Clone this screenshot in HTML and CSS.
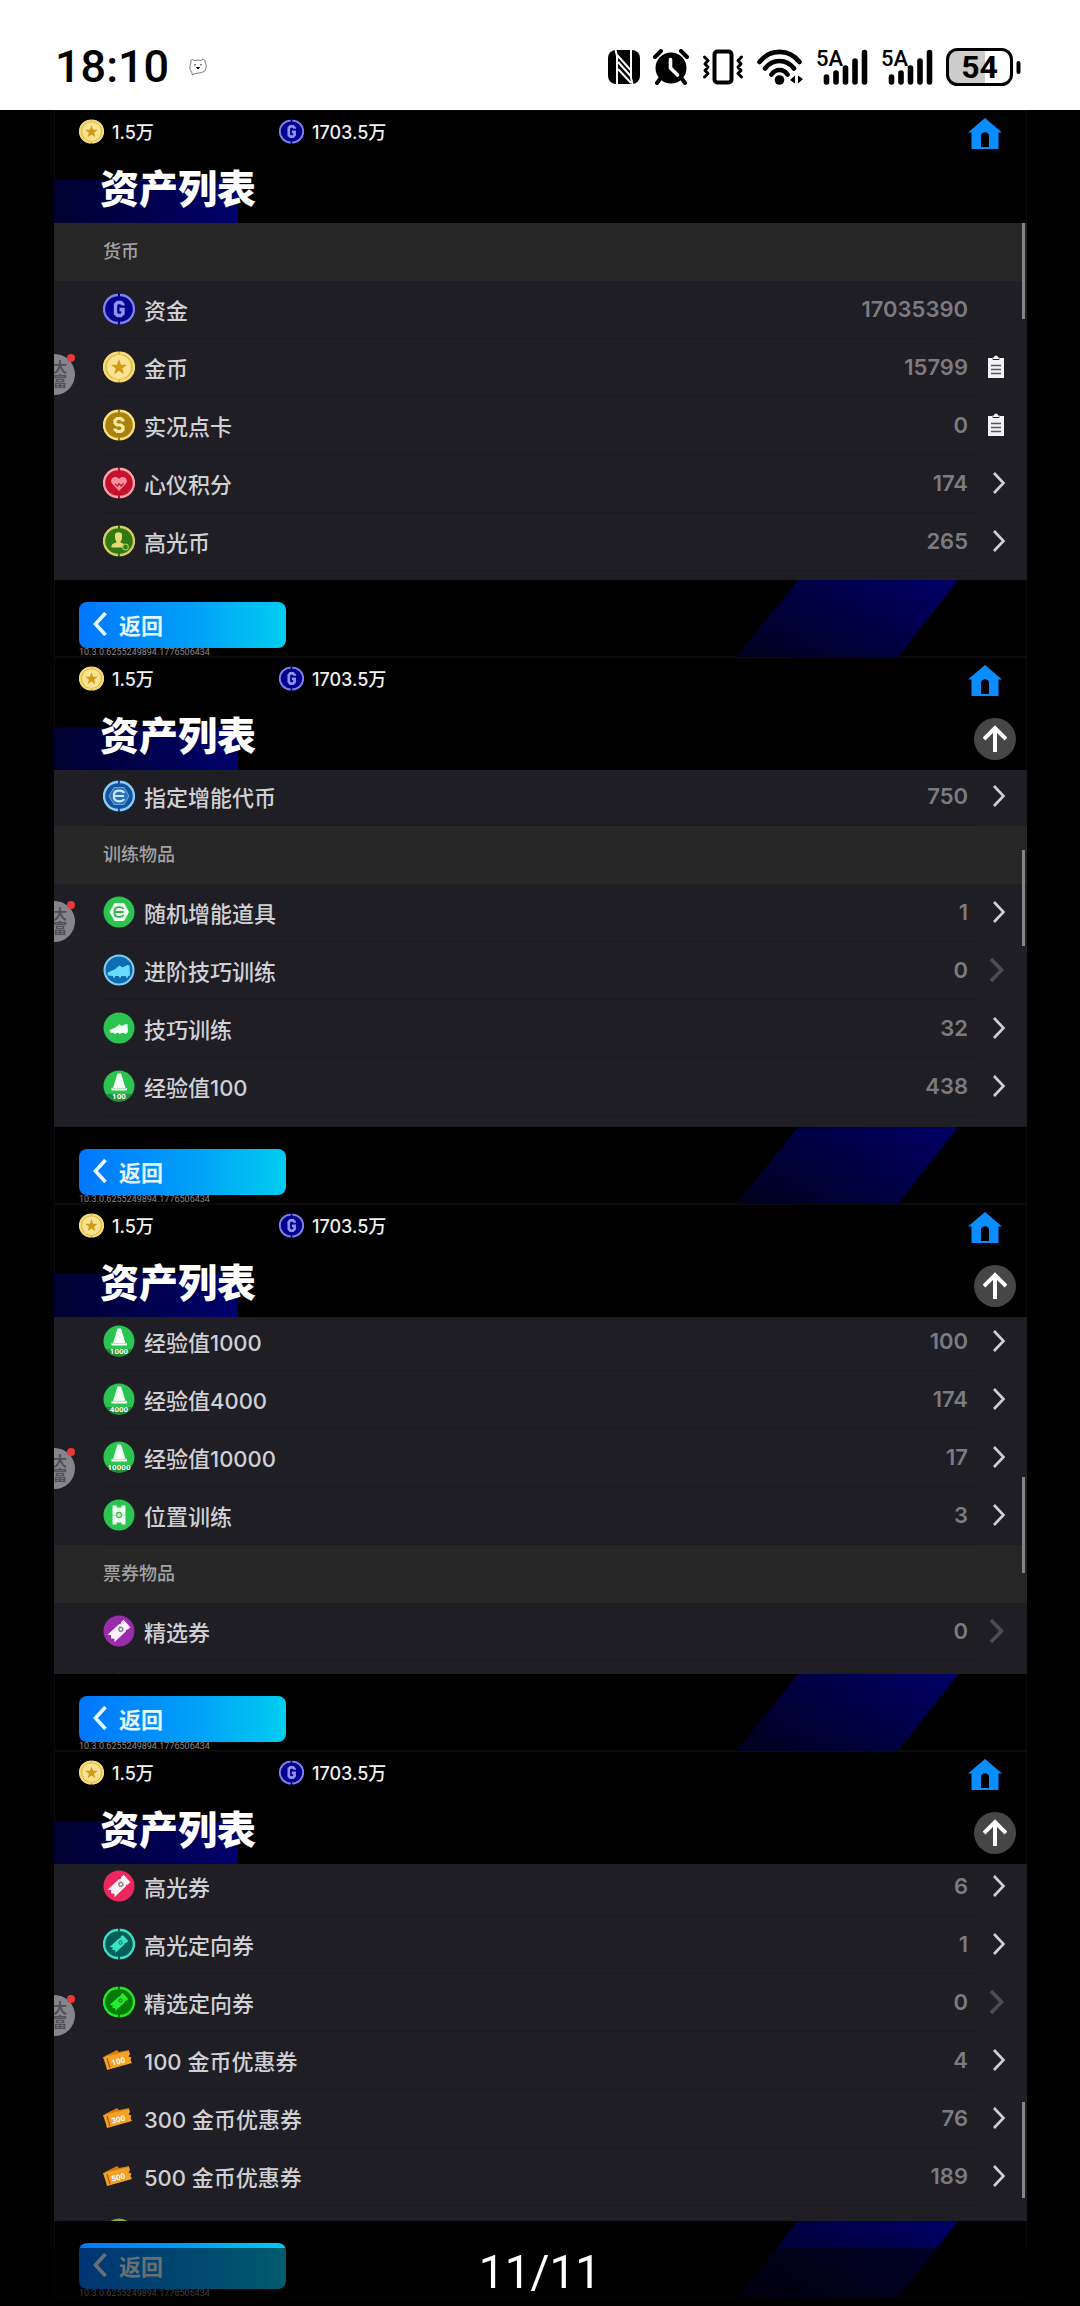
FILE: index.html
```html
<!DOCTYPE html>
<html lang="zh-CN">
<head>
  <meta charset="UTF-8" />
  <meta name="viewport" content="width=device-width, initial-scale=1" />
  <title>资产列表</title>
  <link rel="stylesheet" href="styles.css">
</head>
<body>

<!-- shared icons -->
<svg class="sprite" aria-hidden="true">
  <symbol id="ring" viewBox="0 0 32 32">
    <path d="M17 2a14 14 0 0 1 0 28M15 2a14 14 0 0 0 0 28" fill="none" stroke="currentColor" stroke-width="2.4"/>
  </symbol>
  <symbol id="g" viewBox="0 0 32 32">
    <circle cx="16" cy="16" r="15.500" fill="#00008c"/>
    <use href="#ring" color="#8080ee"/>
    <path d="M20 12.500v-1L18 9.500h-3.500l-2 2v9l2 2H18l2-2v-4h-3.500" fill="none" stroke="#9292f4" stroke-width="3.400"/>
  </symbol>
  <symbol id="gold" viewBox="0 0 32 32">
    <circle cx="16" cy="16" r="15.500" fill="#e3bb48"/>
    <use href="#ring" color="#f7dc78"/>
    <circle cx="16" cy="16" r="12" fill="#fbe394"/>
    <path d="M16 8l2 5.700 6 .1-4.800 3.700 1.800 5.800-5-3.500-5 3.500 1.800-5.800L8 13.800l6-.1z" fill="#d19a12"/>
  </symbol>
  <symbol id="points" viewBox="0 0 32 32">
    <circle cx="16" cy="16" r="15.500" fill="#a9830d"/>
    <use href="#ring" color="#f6df85"/>
    <path d="M20 12.500v-1l-2-2h-4l-2 2v2.500l2 2h4l2 2v2.500l-2 2h-4l-2-2v-1" fill="none" stroke="#fbeaa6" stroke-width="3.200"/>
  </symbol>
  <symbol id="heart" viewBox="0 0 32 32">
    <circle cx="16" cy="16" r="15.500" fill="#c5122c"/>
    <use href="#ring" color="#f7a1ae"/>
    <path d="M16 24l-7-7.500c-3-4 2.500-9.500 7-4.500 4.500-5 10 .5 7 4.500z" fill="#ff8f9d"/>
    <path d="M12 17l2.500 2 1.500-2.500 2 2.500 2.500-2.500" fill="none" stroke="#c5122c" stroke-width="1.200"/>
  </symbol>
  <symbol id="highlight" viewBox="0 0 32 32">
    <circle cx="16" cy="16" r="15.500" fill="#2f7a15"/>
    <use href="#ring" color="#d9cc62"/>
    <path d="M12 9.500c0-3 7-3 7 0v4c0 1.500-1.500 2-1.500 4l3.500 1.500-1.500 3.500H8.500c0-4 1.500-4 5-5 0-2-1.500-2.500-1.500-4z" fill="#e6dc76"/>
    <circle cx="22.500" cy="22" r="2.800" fill="none" stroke="#a8c850" stroke-width="1.200"/>
  </symbol>
  <symbol id="boost" viewBox="0 0 32 32">
    <circle cx="16" cy="16" r="15.500" fill="#16539c"/>
    <use href="#ring" color="#8bcdf6"/>
    <path d="M11 7.500h10l5 8.500-5 8.500H11L6 16z" fill="#2d73bc" stroke="#68a9e3"/>
    <path d="M21 13c-1-3-9-3.500-10 1v4c1 4.500 9 4 10 1M11 16h10" fill="none" stroke="#c8ebff" stroke-width="2.200"/>
  </symbol>
  <symbol id="random" viewBox="0 0 32 32">
    <circle cx="16" cy="16" r="15.500" fill="#2cc450"/>
    <path d="M11.500 7h9.500l5 9-5 9h-9.500l-5-9z" fill="#f0fff2"/>
    <path d="M20.500 13c-1-2.500-8-3-9 1v4c1 4 8 3.500 9 1M12 16h8.500" fill="none" stroke="#36ad4b" stroke-width="1.800"/>
  </symbol>
  <symbol id="boot" viewBox="0 0 32 32">
    <path d="M4.500 18.500l7-3 5-4 3 2 5-2.500 2 .5.500 10-2 .5v1.500h-2v-1.500h-5v1.500h-2v-1.500h-4v1.500h-2v-1.500l-5-.5z" fill="currentColor"/>
  </symbol>
  <symbol id="boot-blue" viewBox="0 0 32 32">
    <circle cx="16" cy="16" r="14.500" fill="#0d6cb2" stroke="#80ccf3" stroke-width="2"/>
    <use href="#boot" color="#6adcff"/>
  </symbol>
  <symbol id="boot-green" viewBox="0 0 32 32">
    <circle cx="16" cy="16" r="15.500" fill="#2cc450"/>
    <use href="#boot" x="3" y="3" width="26" height="26" color="#f2fff4"/>
  </symbol>
  <symbol id="cone" viewBox="0 0 32 32">
    <circle cx="16" cy="16" r="15.500" fill="#2cc450"/>
    <path d="M3 24h26c-5 10-21 10-26 0z" fill="#1f8f3a"/>
    <path d="M14.500 3.500h3.500L22.500 18H24v2.500H8.500V18H10z" fill="#f4fff5"/>
    <path d="M9 18.500h14.500" stroke="#abdcaf" stroke-width=".8"/>
  </symbol>
  <symbol id="pitch" viewBox="0 0 32 32">
    <circle cx="16" cy="16" r="15.500" fill="#2cc450"/>
    <path d="M9.500 6.500h4v2h5v-2h4v19h-4v-2h-5v2h-4z" fill="#f0fff2"/>
    <circle cx="16" cy="16" r="2.500" fill="none" stroke="#46b65a" stroke-width="1.300"/>
    <path d="M9 16h14" stroke="#83ce8f" stroke-width=".8"/>
  </symbol>
  <symbol id="pass" viewBox="0 0 32 32">
    <g transform="rotate(-43 16 16)">
      <path d="M5 11h15.500l1.500 1 1.500-1H27v10h-3.500l-1.500-1-1.500 1H5l2.500-2.500L5 16l2.500-2.500z" fill="currentColor"/>
      <circle cx="18.500" cy="16" r="2" fill="none" stroke="#222" stroke-opacity=".55" stroke-width="1.400"/>
    </g>
  </symbol>
  <symbol id="pass-purple" viewBox="0 0 32 32">
    <circle cx="16" cy="16" r="15.500" fill="#9a2bac"/>
    <use href="#pass" color="#fdf2ff"/>
  </symbol>
  <symbol id="pass-pink" viewBox="0 0 32 32">
    <circle cx="16" cy="16" r="15.500" fill="#ec285f"/>
    <use href="#pass" color="#fff2f6"/>
  </symbol>
  <symbol id="pass-teal" viewBox="0 0 32 32">
    <circle cx="16" cy="16" r="15.500" fill="#075d58"/>
    <use href="#ring" color="#3de0c5"/>
    <use href="#pass" x="3" y="3" width="26" height="26" color="#35e6cb"/>
  </symbol>
  <symbol id="pass-green" viewBox="0 0 32 32">
    <circle cx="16" cy="16" r="15.500" fill="#047b06"/>
    <use href="#ring" color="#27e42c"/>
    <use href="#pass" x="3" y="3" width="26" height="26" color="#25ef2b"/>
  </symbol>
  <symbol id="coupon" viewBox="0 0 32 32">
    <path d="M2 12l12-6 2 2 10-2v6L5 20z" fill="#d97b13"/>
    <path d="M0 13l26-6 1 3-1.500 2.500 3 1-1 2.500 1.500 3L4 26l-1-4z" fill="#f4a125"/>
    <path d="M4 14l3 10" stroke="#a25a08" stroke-width="1.200"/>
  </symbol>
  <symbol id="next" viewBox="0 0 20 24">
    <path d="M8 2l9.500 10L8 22" fill="none" stroke="currentColor" stroke-width="2.600"/>
  </symbol>
  <symbol id="next-off" viewBox="0 0 20 24">
    <path d="M5 1l10.500 11L5 23" fill="none" stroke="currentColor" stroke-width="3.600"/>
  </symbol>
  <symbol id="clip" viewBox="0 0 20 24">
    <path d="M2 3h4l1 2h6l1-2h4v20H2z" fill="#f2f2f4"/>
    <path d="M6.500 4V2.500h1.500a2 2 0 0 1 4 0h1.500V4z" fill="#f2f2f4"/>
    <path d="M5 10.500h10M5 14.500h10M5 18.500h10" stroke="#55555a" stroke-width="1.300"/>
  </symbol>
  <symbol id="home" viewBox="0 0 34 31">
    <path d="M17 0l17 14.500h-3.500V31h-27V14.500H0zM13 29h8V18c0-5-8-5-8 0z" fill="#0a8dff" fill-rule="evenodd"/>
  </symbol>
  <symbol id="up" viewBox="0 0 24 28">
    <path d="M12 27V3M1 14L12 3l11 11" fill="none" stroke="#fff" stroke-width="4"/>
  </symbol>
  <symbol id="back" viewBox="0 0 14 24">
    <path d="M12.500 1L2.500 12l10 11" fill="none" stroke="currentColor" stroke-width="3.600"/>
  </symbol>
  <symbol id="signal" viewBox="0 0 52 36">
    <text x="0" y="17" class="net">5A</text>
    <path d="M10.500 28v5M20 24v9M29.500 19v14M39 12v21M48.500 3.500V33" stroke="#000" stroke-width="5.600" stroke-linecap="round"/>
  </symbol>
</svg>

<header class="status">
  <time class="clock">18:10</time>
  <svg class="bear" viewBox="0 0 18 18" fill="none" stroke="#555"><path d="M3 17c.5-1 0-2-.5-3C0 11 1 7 2 5c-1-3 1-4.500 3-2.500 3-.5 5-.5 7 0 1-2 4.500-1.500 4 1.500 2 3 1.500 7-1 9.500-3 2-8 1-12 3.500z" stroke-width=".8"/><path d="M6 6v1.500M12 6v1.500M7.500 9.500h3L9 11z" stroke="#000"/></svg>
  <div class="status-icons">
    <svg width="32" height="34" viewBox="0 0 32 34"><rect width="32" height="34" rx="8"/><path d="M7.500 0l1.500 6v28M24.500 34L23 28V0" stroke="#fff" stroke-width="2" fill="none"/><path d="M9 5l14 15.500M10 12l13 14.500M10 19l13 14" stroke="#fff" stroke-width="2" fill="none"/></svg>
    <svg width="36" height="36" viewBox="0 0 36 36"><circle cx="18" cy="19" r="15.500"/><path d="M2 8l6-6M34 8l-6-6M7 30l-3 4M29 30l3 4" stroke="#000" stroke-width="4" stroke-linecap="round"/><path d="M17.500 10.500V19l7 7" fill="none" stroke="#fff" stroke-width="3.600" stroke-linecap="round"/></svg>
    <svg width="42" height="36" viewBox="0 0 42 36" fill="none" stroke="#000" stroke-linecap="round" stroke-linejoin="round"><rect x="12.500" y="2.500" width="17" height="31" rx="3" stroke-width="4"/><path d="M2.500 8l3.500 3.500L3 15l3 3-3 3.500 3 3L2.500 28M39.500 8L36 11.500l3 3.500-3 3 3 3.500-3 3 3.500 3.500" stroke-width="3"/></svg>
    <svg width="46" height="36" viewBox="0 0 46 36" fill="none" stroke="#000" stroke-width="4.600" stroke-linecap="round"><path d="M2.500 13C13-.5 32-.5 42.500 13M8 19.500c7.500-10 21.500-10 29 0M14.500 25.500c4-6 12-6 16 0"/><circle cx="22.500" cy="31" r="4.800" fill="#000" stroke="none"/><path d="M38 26.500v8l-5-3.500zM41 34.500v-8l5 3.500z" fill="#000" stroke="none"/></svg>
    <svg width="52" height="36"><use href="#signal"/></svg>
    <svg width="52" height="36"><use href="#signal"/></svg>
    <svg width="76" height="38" viewBox="0 0 76 38"><path d="M12 2h27v34H12C6 36 2 32 2 26V12C2 6 6 2 12 2z" fill="#ccc"/><rect x="1.500" y="1.500" width="64" height="35" rx="10" fill="none" stroke="#000" stroke-width="3"/><path d="M72.500 15v9" stroke="#000" stroke-width="4" stroke-linecap="round"/><text x="33.500" y="30" text-anchor="middle" class="charge">54</text></svg>
  </div>
</header>

<main class="viewer">

  <section class="shot">
    <div class="top">
      <div class="wallet">
        <span class="money"><svg><use href="#gold"/></svg>1.5万</span>
        <span class="money"><svg><use href="#g"/></svg>1703.5万</span>
        <a class="home" href="#" aria-label="主页"><svg><use href="#home"/></svg></a>
      </div>
      <h2 class="title">资产列表</h2>
    </div>
    <div class="list">
      <ul class="rows">
        <li class="group">货币</li>
        <li class="row"><svg class="icon"><use href="#g"/></svg><span class="name">资金</span><span class="count">17035390</span><span class="go"></span></li>
        <li class="row"><svg class="icon"><use href="#gold"/></svg><span class="name">金币</span><span class="count">15799</span><button class="go" aria-label="金币明细"><svg><use href="#clip"/></svg></button></li>
        <li class="row"><svg class="icon"><use href="#points"/></svg><span class="name">实况点卡</span><span class="count">0</span><button class="go" aria-label="点卡明细"><svg><use href="#clip"/></svg></button></li>
        <li class="row"><svg class="icon"><use href="#heart"/></svg><span class="name">心仪积分</span><span class="count">174</span><button class="go" aria-label="查看"><svg><use href="#next"/></svg></button></li>
        <li class="row"><svg class="icon"><use href="#highlight"/></svg><span class="name">高光币</span><span class="count">265</span><button class="go" aria-label="查看"><svg><use href="#next"/></svg></button></li>
      </ul>
      <span class="thumb"></span>
      <span class="float"><b>大<br>富</b></span>
    </div>
    <div class="bottom">
      <button class="back"><svg><use href="#back"/></svg>返回</button>
      <small class="version">10.3.0.6255249894.1776506434</small>
    </div>
  </section>

  <section class="shot">
    <div class="top">
      <div class="wallet">
        <span class="money"><svg><use href="#gold"/></svg>1.5万</span>
        <span class="money"><svg><use href="#g"/></svg>1703.5万</span>
        <a class="home" href="#" aria-label="主页"><svg><use href="#home"/></svg></a>
      </div>
      <h2 class="title">资产列表</h2>
      <button class="to-top" aria-label="回到顶部"><svg><use href="#up"/></svg></button>
    </div>
    <div class="list">
      <ul class="rows scroll-2">
        <li class="row"><svg class="icon"><use href="#boost"/></svg><span class="name">指定增能代币</span><span class="count">750</span><button class="go" aria-label="查看"><svg><use href="#next"/></svg></button></li>
        <li class="group">训练物品</li>
        <li class="row"><svg class="icon"><use href="#random"/></svg><span class="name">随机增能道具</span><span class="count">1</span><button class="go" aria-label="查看"><svg><use href="#next"/></svg></button></li>
        <li class="row"><svg class="icon"><use href="#boot-blue"/></svg><span class="name">进阶技巧训练</span><span class="count">0</span><button class="go" aria-label="查看" disabled><svg><use href="#next-off"/></svg></button></li>
        <li class="row"><svg class="icon"><use href="#boot-green"/></svg><span class="name">技巧训练</span><span class="count">32</span><button class="go" aria-label="查看"><svg><use href="#next"/></svg></button></li>
        <li class="row"><svg class="icon"><use href="#cone"/><text x="16" y="29">100</text></svg><span class="name">经验值100</span><span class="count">438</span><button class="go" aria-label="查看"><svg><use href="#next"/></svg></button></li>
      </ul>
      <span class="thumb thumb-2"></span>
      <span class="float"><b>大<br>富</b></span>
    </div>
    <div class="bottom">
      <button class="back"><svg><use href="#back"/></svg>返回</button>
      <small class="version">10.3.0.6255249894.1776506434</small>
    </div>
  </section>

  <section class="shot">
    <div class="top">
      <div class="wallet">
        <span class="money"><svg><use href="#gold"/></svg>1.5万</span>
        <span class="money"><svg><use href="#g"/></svg>1703.5万</span>
        <a class="home" href="#" aria-label="主页"><svg><use href="#home"/></svg></a>
      </div>
      <h2 class="title">资产列表</h2>
      <button class="to-top" aria-label="回到顶部"><svg><use href="#up"/></svg></button>
    </div>
    <div class="list">
      <ul class="rows scroll-3">
        <li class="row"><svg class="icon"><use href="#cone"/><text x="16" y="29">1000</text></svg><span class="name">经验值1000</span><span class="count">100</span><button class="go" aria-label="查看"><svg><use href="#next"/></svg></button></li>
        <li class="row"><svg class="icon"><use href="#cone"/><text x="16" y="29">4000</text></svg><span class="name">经验值4000</span><span class="count">174</span><button class="go" aria-label="查看"><svg><use href="#next"/></svg></button></li>
        <li class="row"><svg class="icon"><use href="#cone"/><text x="16" y="29">10000</text></svg><span class="name">经验值10000</span><span class="count">17</span><button class="go" aria-label="查看"><svg><use href="#next"/></svg></button></li>
        <li class="row"><svg class="icon"><use href="#pitch"/></svg><span class="name">位置训练</span><span class="count">3</span><button class="go" aria-label="查看"><svg><use href="#next"/></svg></button></li>
        <li class="group">票券物品</li>
        <li class="row"><svg class="icon"><use href="#pass-purple"/></svg><span class="name">精选券</span><span class="count">0</span><button class="go" aria-label="查看" disabled><svg><use href="#next-off"/></svg></button></li>
        <li class="row"><svg class="icon"><circle cx="16" cy="16" r="15.500" fill="#a01230"/></svg></li>
      </ul>
      <span class="thumb thumb-3"></span>
      <span class="float"><b>大<br>富</b></span>
    </div>
    <div class="bottom">
      <button class="back"><svg><use href="#back"/></svg>返回</button>
      <small class="version">10.3.0.6255249894.1776506434</small>
    </div>
  </section>

  <section class="shot">
    <div class="top">
      <div class="wallet">
        <span class="money"><svg><use href="#gold"/></svg>1.5万</span>
        <span class="money"><svg><use href="#g"/></svg>1703.5万</span>
        <a class="home" href="#" aria-label="主页"><svg><use href="#home"/></svg></a>
      </div>
      <h2 class="title">资产列表</h2>
      <button class="to-top" aria-label="回到顶部"><svg><use href="#up"/></svg></button>
    </div>
    <div class="list">
      <ul class="rows scroll-4">
        <li class="row"><svg class="icon"><use href="#pass-pink"/></svg><span class="name">高光券</span><span class="count">6</span><button class="go" aria-label="查看"><svg><use href="#next"/></svg></button></li>
        <li class="row"><svg class="icon"><use href="#pass-teal"/></svg><span class="name">高光定向券</span><span class="count">1</span><button class="go" aria-label="查看"><svg><use href="#next"/></svg></button></li>
        <li class="row"><svg class="icon"><use href="#pass-green"/></svg><span class="name">精选定向券</span><span class="count">0</span><button class="go" aria-label="查看" disabled><svg><use href="#next-off"/></svg></button></li>
        <li class="row"><svg class="icon"><use href="#coupon"/><text x="15" y="20" transform="rotate(-14 16 16)">100</text></svg><span class="name">100 金币优惠券</span><span class="count">4</span><button class="go" aria-label="查看"><svg><use href="#next"/></svg></button></li>
        <li class="row"><svg class="icon"><use href="#coupon"/><text x="15" y="20" transform="rotate(-14 16 16)">300</text></svg><span class="name">300 金币优惠券</span><span class="count">76</span><button class="go" aria-label="查看"><svg><use href="#next"/></svg></button></li>
        <li class="row"><svg class="icon"><use href="#coupon"/><text x="15" y="20" transform="rotate(-14 16 16)">500</text></svg><span class="name">500 金币优惠券</span><span class="count">189</span><button class="go" aria-label="查看"><svg><use href="#next"/></svg></button></li>
        <li class="row"><svg class="icon"><circle cx="16" cy="16" r="15.500" fill="#7fb53c"/></svg></li>
      </ul>
      <span class="thumb thumb-4"></span>
      <span class="float"><b>大<br>富</b></span>
    </div>
    <div class="bottom">
      <button class="back"><svg><use href="#back"/></svg>返回</button>
      <small class="version">10.3.0.6255249894.1776506434</small>
    </div>
  </section>

</main>

<footer class="pager">11/11</footer>

</body>
</html>
```

FILE: styles.css
```css
* {
  box-sizing: border-box;
}

body {
  margin: 0;
  background: #000;
  color: #d0d0d4;
  font-family: Inter, "Noto Sans CJK SC", sans-serif;
}

button {
  padding: 0;
  border: none;
  background: none;
  color: inherit;
  font: inherit;
  cursor: pointer;
}

.sprite {
  display: none;
}

/* phone status bar */
.status {
  display: flex;
  align-items: center;
  height: 110px;
  padding: 24px 58px 0 55px;
  background: #fff;
  color: #000;
}

.clock {
  font: 500 45px/48px Roboto, sans-serif;
}

.bear {
  width: 18px;
  height: 18px;
  margin-left: 20px;
}

.status-icons {
  display: flex;
  align-items: center;
  gap: 13px;
  margin-left: auto;
}

.net {
  font: 500 22px Roboto, sans-serif;
}

.charge {
  font: 700 32px Roboto, sans-serif;
}

/* one game screen */
.viewer {
  padding: 0 53px 8px 54px;
}

.shot {
  box-shadow: inset 0 0 0 1px #0b0b0d;
}

.top {
  position: relative;
  height: 113px;
}

.wallet {
  display: flex;
  align-items: center;
  height: 44px;
  padding: 0 25px 2px;
}

.money {
  display: flex;
  align-items: center;
  gap: 8px;
  width: 200px;
  color: #f0f0f0;
  font-size: 18px;
  font-weight: 500;
}

.money svg {
  width: 25px;
  height: 25px;
}

.home {
  display: flex;
  margin: 4px 0 0 auto;
}

.home svg {
  width: 34px;
  height: 31px;
}

.title {
  width: 184px;
  height: 43px;
  margin: 26px 0 0;
  padding-left: 46px;
  background: linear-gradient(to right, #000030, #00006c);
  color: #fff;
  font-size: 39px;
  font-weight: 900;
  line-height: 18px;
  white-space: nowrap;
}

.to-top {
  position: absolute;
  top: 61px;
  right: 11px;
  display: grid;
  place-items: center;
  width: 42px;
  height: 42px;
  border-radius: 50%;
  background: #464646;
}

.to-top svg {
  width: 24px;
  height: 28px;
}

.list {
  position: relative;
  height: 357px;
  overflow: hidden;
  background: #1f1e24;
}

.rows {
  margin: 0;
  padding: 0;
  list-style: none;
}

.scroll-2 {
  margin-top: -2px;
}

.scroll-3 {
  margin-top: -4px;
}

.scroll-4 {
  margin-top: -6px;
}

.group {
  height: 58px;
  padding-left: 49px;
  background: #262626;
  color: #a2a2a4;
  font-size: 18px;
  font-weight: 500;
  line-height: 58px;
}

.row {
  display: flex;
  align-items: center;
  height: 58px;
  padding: 0 21px 2px 49px;
  background: linear-gradient(#1a1a1f, #1a1a1f) 49px 100% / calc(100% - 98px) 1px no-repeat;
  font-size: 22px;
  font-weight: 500;
}

.icon {
  width: 32px;
  height: 32px;
  margin-right: 9px;
}

.icon text {
  fill: #fff;
  font: 700 8px Roboto, sans-serif;
  text-anchor: middle;
}

.name {
  flex: 1;
}

.count {
  color: #7b7b80;
  font-weight: 600;
}

.go {
  display: flex;
  width: 20px;
  height: 24px;
  margin-left: 18px;
}

.go svg {
  width: 20px;
  height: 24px;
}

.go:disabled {
  color: #4d4d51;
}

.thumb {
  position: absolute;
  top: 0;
  right: 2px;
  width: 3px;
  height: 96px;
  background: #858587;
}

.thumb-2 {
  top: 80px;
}

.thumb-3 {
  top: 160px;
}

.thumb-4 {
  top: 238px;
}

/* floating helper, half hidden behind the left edge */
.float {
  position: absolute;
  top: 131px;
  left: -20px;
  width: 41px;
  height: 41px;
  border-radius: 50%;
  background: #85858a;
  color: #505058;
  font-size: 14px;
  line-height: 14px;
  text-align: right;
}

.float b {
  display: block;
  padding: 6px 8px;
}

.float::after {
  content: "";
  position: absolute;
  top: 0;
  right: 0;
  width: 8px;
  height: 8px;
  border-radius: 50%;
  background: #e8393a;
}

.bottom {
  position: relative;
  height: 77px;
  padding: 22px 25px 0;
}

.bottom::after {
  content: "";
  position: absolute;
  top: 0;
  right: 69px;
  width: 222px;
  height: 77px;
  background: linear-gradient(30deg, #00001c, #000068);
  clip-path: polygon(28% 0, 100% 0, 73% 100%, 0 100%);
}

.back {
  display: flex;
  align-items: center;
  gap: 12px;
  width: 207px;
  height: 46px;
  padding: 0 0 2px 14px;
  border-radius: 8px;
  background: linear-gradient(to right, #0076ff, #00a0f8 55%, #00cdf0);
  color: #e4f6ff;
  font-size: 22px;
  font-weight: 700;
}

.back svg {
  width: 14px;
  height: 24px;
}

.version {
  display: block;
  color: #88888b;
  font: 9px/9px Roboto, sans-serif;
}

/* page counter over the last screen */
.pager {
  position: fixed;
  right: 0;
  bottom: 0;
  left: 0;
  height: 58px;
  background: rgba(0, 0, 0, 0.55);
  color: #fff;
  font: 46px/48px Roboto, sans-serif;
  text-align: center;
}
```
